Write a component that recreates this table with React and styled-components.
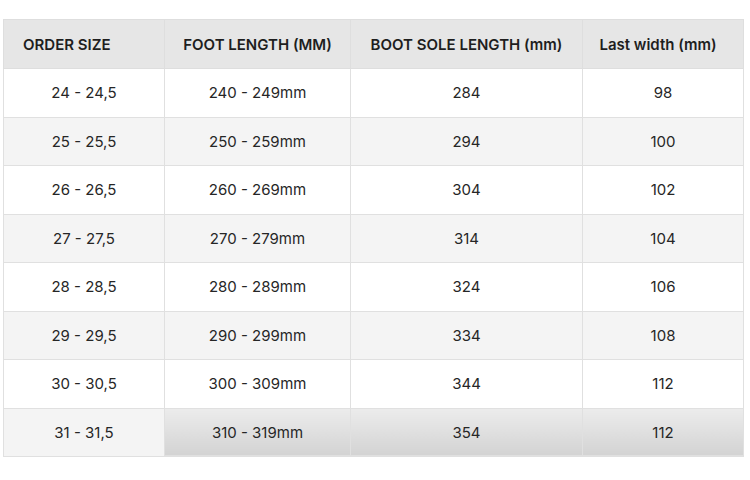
import React from 'react';
import styled, { createGlobalStyle } from 'styled-components';

// Estilos globais da página
const GlobalStyle = createGlobalStyle`
  body {
    margin: 0;
    background: #fff;
    font-family: Inter, "Liberation Sans", sans-serif;
    color: #222;
  }
`;

const Wrapper = styled.div`
  padding: 19px 7px 0 3px;
`;

const Table = styled.table`
  width: 740px;
  border-collapse: collapse;
  table-layout: fixed;
  border: 1px solid #e0e0e0;
`;

const HeadCell = styled.th`
  height: 48px;
  padding: ${(p) => (p.$left ? '0 0 0 19px' : p.$last ? '0 10px 0 0' : '0')};
  background: #e6e6e6;
  border: 1px solid #dedede;
  font-size: 15px;
  font-weight: 600;
  color: #1e1e1e;
  text-align: ${(p) => (p.$left ? 'left' : 'center')};
`;

const Row = styled.tr`
  background: ${(p) => (p.$alt ? '#f4f4f4' : '#fff')};
`;

const Cell = styled.td`
  height: 47.5px;
  padding: 0;
  border: 1px solid #e0e0e0;
  font-size: 15px;
  text-align: center;
  color: #262626;
  background: ${(p) =>
    p.$selected ? 'linear-gradient(#ececec, #d3d3d3)' : 'transparent'};
`;

const columns = [
  { label: 'ORDER SIZE', width: 161, left: true },
  { label: 'FOOT LENGTH (MM)', width: 186 },
  { label: 'BOOT SOLE LENGTH (mm)', width: 232 },
  { label: 'Last width (mm)', width: 161, last: true },
];

const rows = [
  ['24 - 24,5', '240 - 249mm', '284', '98'],
  ['25 - 25,5', '250 - 259mm', '294', '100'],
  ['26 - 26,5', '260 - 269mm', '304', '102'],
  ['27 - 27,5', '270 - 279mm', '314', '104'],
  ['28 - 28,5', '280 - 289mm', '324', '106'],
  ['29 - 29,5', '290 - 299mm', '334', '108'],
  ['30 - 30,5', '300 - 309mm', '344', '112'],
  ['31 - 31,5', '310 - 319mm', '354', '112'],
];

const App = () => {
  return (
    <Wrapper>
      <GlobalStyle />
      <Table>
        <colgroup>
          {columns.map((c) => (
            <col key={c.label} style={{ width: c.width }} />
          ))}
        </colgroup>
        <thead>
          <tr>
            {columns.map((c) => (
              <HeadCell key={c.label} $left={c.left} $last={c.last}>
                {c.label}
              </HeadCell>
            ))}
          </tr>
        </thead>
        <tbody>
          {rows.map((r, i) => (
            <Row key={r[0]} $alt={i % 2 === 1}>
              {r.map((v, j) => (
                <Cell key={j} $selected={i === rows.length - 1 && j > 0}>
                  {v}
                </Cell>
              ))}
            </Row>
          ))}
        </tbody>
      </Table>
    </Wrapper>
  );
};

export default App;
